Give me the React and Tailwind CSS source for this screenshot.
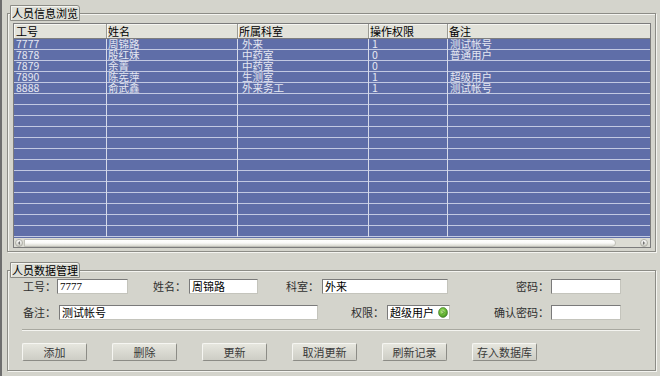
import React from "react";

const rows = [
  ["7777", "周锦路", "外来", "1", "测试帐号"],
  ["7878", "殷红妹", "中药室", "0", "普通用户"],
  ["7879", "余菁", "中药室", "0", ""],
  ["7890", "陈宪萍", "生测室", "1", "超级用户"],
  ["8888", "俞武鑫", "外来务工", "1", "测试帐号"],
];
while (rows.length < 18) rows.push(["", "", "", "", ""]);

const gridCols = "grid grid-cols-[92px_131px_131px_79px_1fr]";
const headPad = ["pl-[2px]", "pl-[1px]", "pl-[1px]", "pl-[1px]", "pl-[1px]"];
const rowPad = ["pl-[2px]", "pl-[1px]", "pl-[4px]", "pl-[3px]", "pl-[2px]"];

function Legend({ children }) {
  return (
    <legend className="ml-[2px] h-[16px] px-[1px] border border-[#8c8c86] rounded-tr-[3px] bg-[#dedfd7] text-[11px] leading-[14px] text-black shadow-[inset_1px_1px_0_#f4f4f0]">
      {children}
    </legend>
  );
}

function Input({ w, children, serif }) {
  return (
    <div
      className={`${w} h-[15px] bg-white border border-[#7a7a7a] border-b-[#c4c4bc] border-r-[#c4c4bc] px-[2px] text-[11px] leading-[13px] text-black overflow-hidden whitespace-nowrap ${
        serif ? "font-['Liberation_Serif','Noto_Sans_CJK_SC',serif]" : ""
      }`}
    >
      {children}
    </div>
  );
}

function Label({ w, children }) {
  return (
    <div className={`${w} text-right text-[11px] leading-[15px] text-[#303030] whitespace-nowrap`}>
      {children}
    </div>
  );
}

function Btn({ children }) {
  return (
    <div className="w-[65px] h-[18px] flex items-center justify-center rounded-[2px] border border-[#f6f6f2] border-b-[#8c8c86] border-r-[#8c8c86] bg-gradient-to-b from-[#e6e6de] to-[#cdcdc5] text-[11px] text-[#3a3a3a]">
      {children}
    </div>
  );
}

export default function App() {
  return (
    <div className="w-[660px] h-[376px] bg-[#d4d4cc] border-l-2 border-[#6e6e6e] pl-[5px] pr-[4px] flex flex-col font-['Noto_Sans_CJK_SC',sans-serif] overflow-hidden">
      {/* Group 1 */}
      <fieldset className="mt-[5px] h-[247px] p-0 m-0 border border-[#8c8c86] shadow-[inset_1px_1px_0_#f4f4f0,1px_1px_0_#f4f4f0] min-w-0">
        <Legend>人员信息浏览</Legend>
        <div className="pl-[5px] pt-[2px]">
          <div className="w-[638px] h-[225px] border border-[#7c7c7c] flex flex-col bg-[#e4e4dc]">
            {/* header */}
            <div className={`${gridCols} h-[15px] bg-[#e2e2da] border-b border-[#7e7e7e]`}>
              {["工号", "姓名", "所属科室", "操作权限", "备注"].map((h, i) => (
                <div
                  key={i}
                  className={`${headPad[i]} text-[11px] leading-[14px] text-black ${
                    i > 0 ? "border-l border-[#9a9a94]" : ""
                  } shadow-[inset_1px_1px_0_#f6f6f2]`}
                >
                  {h}
                </div>
              ))}
            </div>
            {/* body */}
            <div className="h-[199px] bg-[#5f6ea8]">
              {rows.map((r, ri) => (
                <div key={ri} className={`${gridCols} h-[11px] shadow-[inset_0_-1px_0_#c2c9e2]`}>
                  {r.map((c, ci) => (
                    <div
                      key={ci}
                      className={`${rowPad[ci]} h-[11px] text-[10.5px] leading-[10px] text-[#e6e8f2] whitespace-nowrap ${
                        ci > 0 ? "border-l border-[#d6daea]" : ""
                      }`}
                    >
                      {c}
                    </div>
                  ))}
                </div>
              ))}
            </div>
            {/* scrollbar */}
            <div className="h-[9px] flex items-center bg-[#dcdcd4] px-[1px]">
              <div className="w-[8px] h-[8px] rounded-full bg-gradient-to-b from-white to-[#c8c8c0] border border-[#b0b0a8] flex items-center justify-center">
                <svg width="4" height="4" viewBox="0 0 4 4">
                  <path d="M3 0 L1 2 L3 4 Z" fill="#707070" />
                </svg>
              </div>
              <div className="ml-[1px] w-[592px] h-[8px] rounded-r-[4px] bg-gradient-to-b from-white via-[#fafaf8] to-[#d8d8d0] border border-[#c0c0b8]" />
              <div className="flex-1" />
              <div className="w-[8px] h-[8px] rounded-full bg-gradient-to-b from-white to-[#c8c8c0] border border-[#b0b0a8] flex items-center justify-center mr-[1px]">
                <svg width="4" height="4" viewBox="0 0 4 4">
                  <path d="M1 0 L3 2 L1 4 Z" fill="#707070" />
                </svg>
              </div>
            </div>
          </div>
        </div>
      </fieldset>

      {/* Group 2 */}
      <fieldset className="mt-[10px] h-[109px] p-0 m-0 border border-[#8c8c86] shadow-[inset_1px_1px_0_#f4f4f0,1px_1px_0_#f4f4f0] min-w-0">
        <Legend>人员数据管理</Legend>
        <div className="flex flex-col">
          <div className="mt-[1px] h-[15px] flex items-center">
            <Label w="w-[48px]">工号：</Label>
            <div className="ml-[1px]">
              <Input w="w-[71px]" serif>7777</Input>
            </div>
            <Label w="w-[58px]">姓名：</Label>
            <div className="ml-[3px]">
              <Input w="w-[69px]">周锦路</Input>
            </div>
            <Label w="w-[61px]">科室：</Label>
            <div className="ml-[3px]">
              <Input w="w-[126px]">外来</Input>
            </div>
            <Label w="w-[101px]">密码：</Label>
            <div className="ml-[2px]">
              <Input w="w-[70px]"></Input>
            </div>
          </div>
          <div className="mt-[11px] h-[15px] flex items-center">
            <Label w="w-[48px]">备注：</Label>
            <div className="ml-[3px]">
              <Input w="w-[259px]">测试帐号</Input>
            </div>
            <Label w="w-[66px]">权限：</Label>
            <div className="ml-[3px] w-[63px] h-[15px] bg-white border border-[#7a7a7a] border-b-[#c4c4bc] border-r-[#c4c4bc] flex items-center pl-[2px] pr-[1px]">
              <span className="flex-1 text-[11px] leading-[13px] text-black whitespace-nowrap">超级用户</span>
              <svg width="10" height="11" viewBox="0 0 10 11">
                <defs>
                  <radialGradient id="g" cx="0.45" cy="0.4" r="0.6">
                    <stop offset="0" stopColor="#c8f0a0" />
                    <stop offset="0.5" stopColor="#72c23c" />
                    <stop offset="1" stopColor="#3e8a1e" />
                  </radialGradient>
                </defs>
                <ellipse cx="5" cy="5.5" rx="4.5" ry="5" fill="url(#g)" stroke="#4a7a30" strokeWidth="0.6" />
                <path d="M4 3.5 L6 5.5 L4 7.5" fill="none" stroke="#3a6a20" strokeWidth="0.8" />
              </svg>
            </div>
            <Label w="w-[99px]">确认密码：</Label>
            <div className="ml-[2px]">
              <Input w="w-[70px]"></Input>
            </div>
          </div>
          <div className="mt-[9px] ml-[14px] w-[618px] h-[2px] border-t border-[#a8a8a0] border-b border-b-[#f4f4f0]" />
          <div className="mt-[12px] ml-[14px] flex gap-[25px]">
            <Btn>添加</Btn>
            <Btn>删除</Btn>
            <Btn>更新</Btn>
            <Btn>取消更新</Btn>
            <Btn>刷新记录</Btn>
            <Btn>存入数据库</Btn>
          </div>
        </div>
      </fieldset>
    </div>
  );
}
